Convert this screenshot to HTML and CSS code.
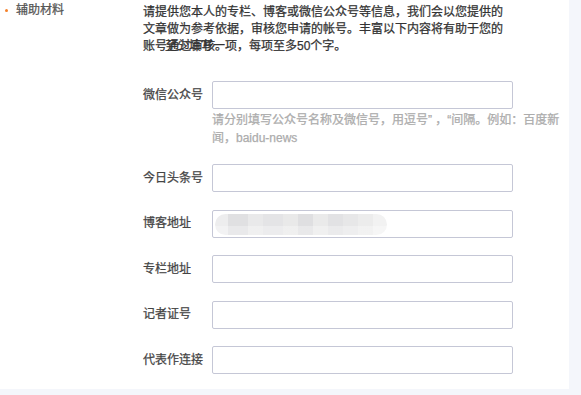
FILE: index.html
```html
<!DOCTYPE html>
<html lang="zh-CN">
<head>
<meta charset="utf-8">
<title>辅助材料</title>
<link rel="stylesheet" href="styles.css">
</head>
<body>
<div class="panel">
  <div class="aside">
    <span class="dot"></span>
    <span class="aside-label">辅助材料</span>
  </div>
  <div class="main">
    <div class="intro">
      <p class="intro-text">请提供您本人的专栏、博客或微信公众号等信息，我们会以您提供的文章做为参考依据，审核您申请的帐号。丰富以下内容将有助于您的账号通过审核。</p>
      <p class="intro-note">至少填写一项，每项至多50个字。</p>
    </div>
    <div class="form">
      <div class="group">
        <div class="row">
          <label class="label">微信公众号</label>
          <div class="input"></div>
        </div>
        <p class="hint">请分别填写公众号名称及微信号，用逗号” ，“间隔。例如：百度新闻，baidu-news</p>
      </div>
      <div class="row">
        <label class="label">今日头条号</label>
        <div class="input"></div>
      </div>
      <div class="row">
        <label class="label">博客地址</label>
        <div class="input"><span class="mosaic"></span></div>
      </div>
      <div class="row">
        <label class="label">专栏地址</label>
        <div class="input"></div>
      </div>
      <div class="row">
        <label class="label">记者证号</label>
        <div class="input"></div>
      </div>
      <div class="row">
        <label class="label">代表作连接</label>
        <div class="input"></div>
      </div>
    </div>
  </div>
</div>
</body>
</html>
```
FILE: styles.css
```css
* { box-sizing: border-box; }

html, body {
  margin: 0;
  padding: 0;
  background: #f4f6fb;
  font-family: "Liberation Sans", "Noto Sans CJK SC", sans-serif;
  font-size: 12px;
  color: #333;
}

.panel {
  width: 569px;
  height: 389px;
  background: #fff;
  display: flex;
  overflow: hidden;
  -webkit-text-stroke: 0.25px currentColor;
}

.aside {
  width: 143px;
  flex: none;
  padding: 1.5px 0 0 5px;
  display: flex;
  align-items: center;
  align-self: flex-start;
  height: 18.5px;
}

.dot {
  width: 3px;
  height: 3px;
  border-radius: 50%;
  background: #f5812a;
  margin-right: 8px;
  flex: none;
}

.aside-label {
  color: #555;
  line-height: 17px;
}

.main {
  padding-top: 4px;
  flex: 1;
}

.intro {
  display: grid;
  width: 362px;
}

.intro-text,
.intro-note {
  grid-area: 1 / 1;
  margin: 0;
  line-height: 17px;
  color: #333;
}

.intro-note {
  align-self: end;
  padding-left: 22px;
}

.form {
  margin-top: 26px;
  display: flex;
  flex-direction: column;
  gap: 17.5px;
}

.row {
  display: flex;
  align-items: center;
}

.label {
  width: 69px;
  flex: none;
  color: #444;
  line-height: 17px;
}

.input {
  width: 301px;
  height: 28px;
  border: 1px solid #c5c7d6;
  border-radius: 2px;
  background: #fff;
  padding: 3px 0 0 2px;
}

.hint {
  margin: 1.5px 0 0 69px;
  width: 348px;
  line-height: 18px;
  color: #acacac;
}

.mosaic {
  display: block;
  width: 172px;
  height: 21px;
  border-radius: 11px;
  filter: blur(0.7px);
  background:
    linear-gradient(to bottom, rgba(255,255,255,0) 55%, rgba(255,255,255,0.3) 55%),
    linear-gradient(to right,
      #ededee 0 13px,
      #e0e0e2 13px 33px,
      #e9e9ea 33px 48px,
      #e4e4e6 48px 68px,
      #e9e9e9 68px 83px,
      #dfdfe1 83px 98px,
      #eaeaea 98px 113px,
      #e2e2e4 113px 128px,
      #e7e7e8 128px 143px,
      #ececec 143px 158px,
      #f2f2f2 158px 172px);
}
```
